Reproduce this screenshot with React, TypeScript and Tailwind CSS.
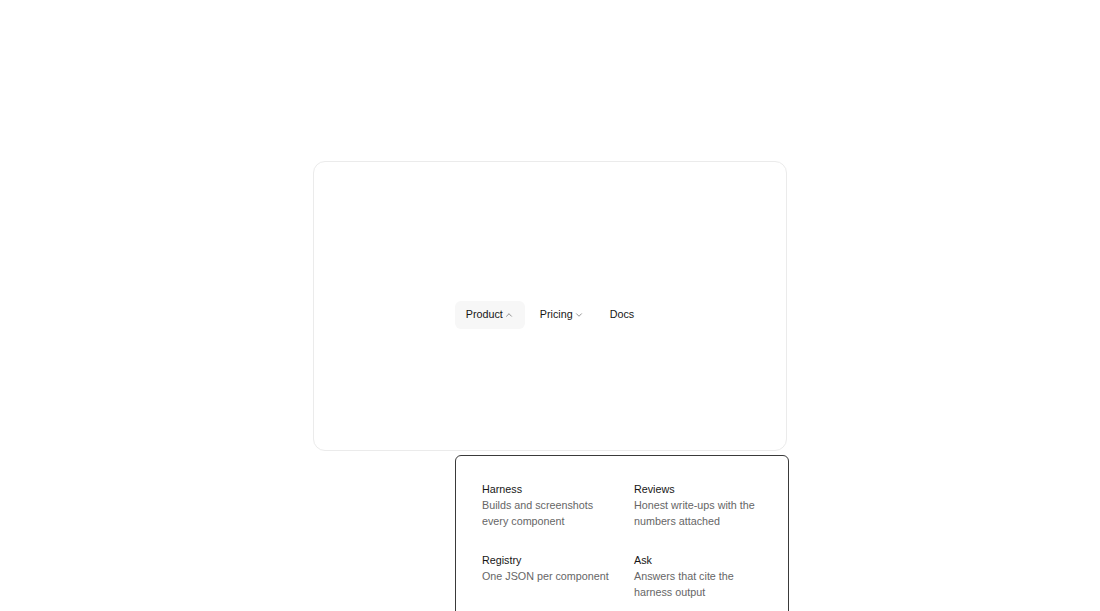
import React from "react";
import { ChevronDown } from "lucide-react";

const items = [
  { title: "Harness", desc: "Builds and screenshots every component" },
  { title: "Reviews", desc: "Honest write-ups with the numbers attached" },
  { title: "Registry", desc: "One JSON per component" },
  { title: "Ask", desc: "Answers that cite the harness output" },
];

export default function App() {
  return (
    <div
      className="h-screen w-full overflow-hidden bg-white flex items-center justify-center"
      style={{ fontFamily: '"Liberation Sans", Arial, sans-serif' }}
    >
      <div className="relative w-[474px] h-[290px] rounded-[12px] border border-[#ebebeb] bg-white flex items-center justify-center pt-[18px]">
        <nav className="flex items-center gap-1 text-[10.75px] text-[#161616]">
          <button className="h-7 px-[11px] rounded-[6px] bg-[#f7f7f7] flex items-center">
            Product
            <ChevronDown size={10} strokeWidth={1.5} className="ml-px rotate-180 text-[#555]" />
          </button>
          <button className="h-7 px-[11px] rounded-[6px] flex items-center">
            Pricing
            <ChevronDown size={10} strokeWidth={1.5} className="ml-px text-[#555]" />
          </button>
          <button className="h-7 px-[11px] rounded-[6px] flex items-center">Docs</button>
        </nav>
        <div className="absolute left-[141px] top-[calc(100%+5px)] w-[334px] h-[200px] rounded-[6px] border border-[#3a3a3a] bg-white">
          <ul className="grid grid-cols-2 gap-[6px] p-[17px]">
            {items.map((it) => (
              <li key={it.title} className="p-[9px]">
                <div className="text-[10.75px] leading-[15px] text-[#161616]">{it.title}</div>
                <p className="text-[10.75px] leading-[16px] text-[#666666]">{it.desc}</p>
              </li>
            ))}
          </ul>
        </div>
      </div>
    </div>
  );
}
